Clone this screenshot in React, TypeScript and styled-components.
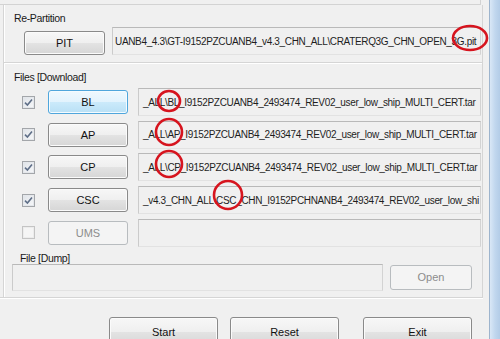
import styled, { createGlobalStyle } from 'styled-components';

const GlobalStyle = createGlobalStyle`
  html, body {
    margin: 0;
    padding: 0;
  }
  body {
    background: #f0f0f0;
    font-family: "Liberation Sans", Arial, sans-serif;
  }
`;

const Window = styled.div`
  position: relative;
  display: flex;
  width: 500px;
  height: 339px;
  overflow: hidden;
  background: #f0f0f0;
`;

const Client = styled.div`
  flex: none;
  width: 489px;
`;

const Frame = styled.div`
  flex: 1;
  border-left: 1px solid #9db4cd;
  background: linear-gradient(90deg, #d9e7f6 0%, #c1d7ee 50%, #b3cce7 100%);
`;

const TopEdge = styled.div`
  width: 480px;
  height: 4px;
  border-bottom: 1px solid #d3d3d3;
  border-right: 1px solid #d3d3d3;
`;

const Panel = styled.div`
  box-sizing: border-box;
  margin-left: 3px;
  width: 480px;
  height: 292px;
  border-left: 1px solid #d5d5d5;
  border-right: 1px solid #d5d5d5;
  box-shadow: inset 1px 0 #fff;
  display: flex;
  flex-direction: column;
`;

const Caption = styled.div<{ $top: number; $left: number }>`
  flex: none;
  padding: ${(p) => p.$top}px 0 0 ${(p) => p.$left}px;
  height: 12px;
  line-height: 12px;
  font-size: 10.5px;
  letter-spacing: -0.35px;
  color: #1a1a1a;
`;

const PitRow = styled.div`
  flex: none;
  display: flex;
  align-items: flex-end;
  gap: 7px;
  height: 28px;
  margin-top: 3px;
  padding: 0 1px 0 20px;
`;

const Separator = styled.div`
  flex: none;
  margin-top: 7px;
  border-top: 1px solid #d5d5d5;
  border-bottom: 1px solid #fff;
`;

const FileList = styled.div`
  flex: none;
  margin-top: 3px;
  display: grid;
  grid-auto-rows: 32.6px;
`;

const FileRow = styled.div`
  display: flex;
  align-items: center;
  padding: 0 1px 0 18px;
`;

const DumpRow = styled.div`
  flex: none;
  display: flex;
  align-items: center;
  gap: 7px;
  height: 27px;
  padding-left: 8px;
`;

const Divider = styled.div`
  width: 483px;
  border-top: 1px solid #d5d5d5;
  border-bottom: 1px solid #fff;
`;

const ButtonBar = styled.div`
  display: flex;
  padding: 18px 0 0 109px;
`;

const Button = styled.button<{ $w: number; $h: number; $gap?: number; $hot?: boolean }>`
  box-sizing: border-box;
  flex: none;
  width: ${(p) => p.$w}px;
  height: ${(p) => p.$h}px;
  margin: 0 0 0 ${(p) => p.$gap ?? 0}px;
  padding: 0;
  border: 1px solid ${(p) => (p.$hot ? '#4fa6dc' : '#8a8a8a')};
  border-radius: 3px;
  background: ${(p) =>
    p.$hot
      ? 'linear-gradient(#eef8fe 0%, #e2f3fd 50%, #cbeafb 51%, #b9e0f5 100%)'
      : 'linear-gradient(#f7f7f7 0%, #efefef 50%, #e3e3e3 51%, #d6d6d6 100%)'};
  box-shadow: inset 0 0 0 1px ${(p) => (p.$hot ? '#f4fbff' : '#fbfbfb')};
  font-family: "Liberation Sans", Arial, sans-serif;
  font-size: 11px;
  color: #111;

  &:disabled {
    border-color: #b8bcbf;
    background: #f4f4f4;
    box-shadow: none;
    color: #8c8c8c;
  }
`;

const PathBox = styled.div<{ $h: number; $indent?: number; $w?: number }>`
  box-sizing: border-box;
  display: flex;
  align-items: center;
  ${(p) => (p.$w ? `width: ${p.$w}px; flex: none;` : 'flex: 1;')}
  height: ${(p) => p.$h}px;
  padding: 0 0 0 ${(p) => p.$indent ?? 4}px;
  border: 1px solid;
  border-color: #b9b9b9 #d3d3d3 #e2e2e2 #cbcbcb;
  background: #f0f0f0;
  overflow: hidden;
  white-space: nowrap;
  font-size: 10px;
  letter-spacing: -0.34px;
  color: #1e1e1e;
`;

const CheckBox = styled.span<{ $off?: boolean }>`
  box-sizing: border-box;
  flex: none;
  display: flex;
  align-items: center;
  justify-content: center;
  width: 13px;
  height: 13px;
  border: 1px solid ${(p) => (p.$off ? '#c4c4c4' : '#a3a6aa')};
  background: ${(p) => (p.$off ? '#f5f5f5' : 'linear-gradient(135deg, #dfe3e8, #f7f8fa)')};
  box-shadow: inset 0 0 0 1px ${(p) => (p.$off ? '#ececec' : '#e4e7eb')};
`;

const FileButton = styled(Button)`
  margin-left: 13px;
  margin-right: 10px;
`;

const Marks = styled.svg`
  position: absolute;
  top: 0;
  left: 0;
  pointer-events: none;
`;

const files = [
  { id: 'BL', on: true, path: '_ALL\\BL_I9152PZCUANB4_2493474_REV02_user_low_ship_MULTI_CERT.tar' },
  { id: 'AP', on: true, path: '_ALL\\AP_I9152PZCUANB4_2493474_REV02_user_low_ship_MULTI_CERT.tar' },
  { id: 'CP', on: true, path: '_ALL\\CP_I9152PZCUANB4_2493474_REV02_user_low_ship_MULTI_CERT.tar' },
  { id: 'CSC', on: true, path: '_v4.3_CHN_ALL\\CSC_CHN_I9152PCHNANB4_2493474_REV02_user_low_shi' },
  { id: 'UMS', on: false, path: '' },
];

const circles = [
  { cx: 470, cy: 38, rx: 17, ry: 12 },
  { cx: 169, cy: 101, rx: 11, ry: 10 },
  { cx: 169, cy: 132, rx: 13, ry: 13 },
  { cx: 169, cy: 164, rx: 13, ry: 13 },
  { cx: 228, cy: 195, rx: 14, ry: 14 },
];

const Check = () => (
  <svg width="9" height="9" viewBox="0 0 9 9">
    <path d="M1 4.6 L3.4 7 L8 1.4" fill="none" stroke="#5f6f88" strokeWidth="1.6" />
  </svg>
);

const App = () => {
  return (
    <Window>
      <GlobalStyle />
      <Client>
        <TopEdge />
        <Panel>
          <Caption $top={7} $left={10}>Re-Partition</Caption>
          <PitRow>
            <Button $w={81} $h={24}>PIT</Button>
            <PathBox $h={28} $indent={2}>
              UANB4_4.3\GT-I9152PZCUANB4_v4.3_CHN_ALL\CRATERQ3G_CHN_OPEN_3G.pit
            </PathBox>
          </PitRow>
          <Separator />
          <Caption $top={7} $left={10}>Files [Download]</Caption>
          <FileList>
            {files.map((f) => (
              <FileRow key={f.id}>
                <CheckBox $off={!f.on}>{f.on && <Check />}</CheckBox>
                <FileButton $w={80} $h={24} $hot={f.id === 'BL'} disabled={!f.on}>
                  {f.id}
                </FileButton>
                <PathBox $h={28}>{f.path}</PathBox>
              </FileRow>
            ))}
          </FileList>
          <Caption $top={3} $left={16}>File [Dump]</Caption>
          <DumpRow>
            <PathBox $h={27} $w={371} />
            <Button $w={82} $h={25} disabled>Open</Button>
          </DumpRow>
        </Panel>
        <Divider />
        <ButtonBar>
          <Button $w={109} $h={30}>Start</Button>
          <Button $w={109} $h={30} $gap={12}>Reset</Button>
          <Button $w={109} $h={30} $gap={24}>Exit</Button>
        </ButtonBar>
      </Client>
      <Frame />
      <Marks width="500" height="339" viewBox="0 0 500 339">
        {circles.map((c, i) => (
          <ellipse key={i} cx={c.cx} cy={c.cy} rx={c.rx} ry={c.ry} fill="none" stroke="#d6141e" strokeWidth="2.6" />
        ))}
      </Marks>
    </Window>
  );
};

export default App;
